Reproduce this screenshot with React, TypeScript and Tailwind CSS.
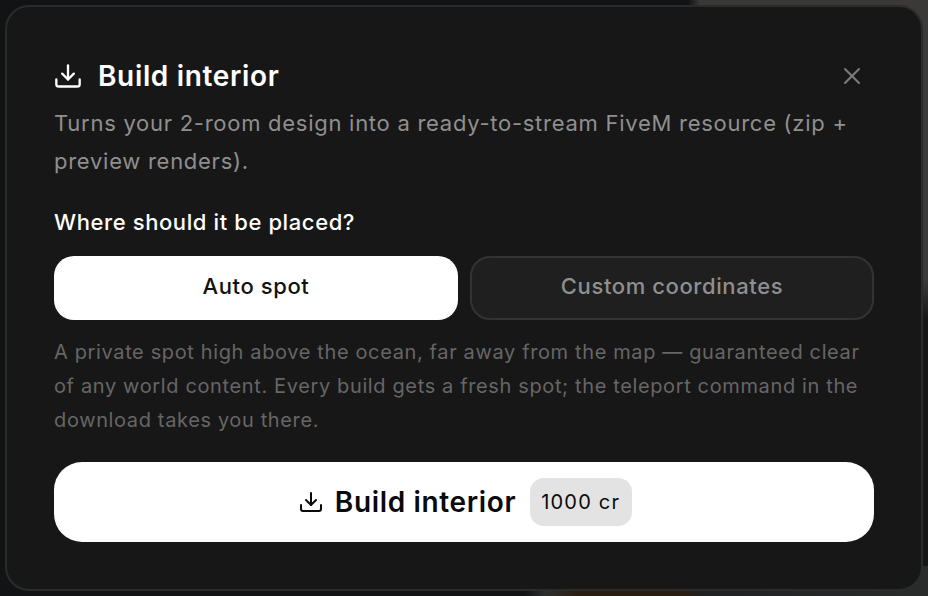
import React from 'react';
import { X } from 'lucide-react';

function DownloadIcon({ className }: { className: string }) {
  return (
    <svg className={className} viewBox="0 0 24 24" fill="none" stroke="currentColor" strokeWidth="2" strokeLinecap="round" strokeLinejoin="round">
      <path d="M12 3v12" />
      <path d="m7 10 5 5 5-5" />
      <path d="M2 15v4a2 2 0 0 0 2 2h16a2 2 0 0 0 2-2v-4" />
    </svg>
  );
}

export default function App() {
  return (
    <div className="h-[596px] w-[928px] overflow-hidden p-[5px] font-['Inter',sans-serif] [background:linear-gradient(90deg,#111315_688px,#3a3938_700px)_0_0/100%_30px_no-repeat,linear-gradient(90deg,#111315_525px,#2e2e2e_545px,#2a1d12_580px,#2a1d12_685px,#1f2122_705px,#2a2b2b_928px)_0_100%/100%_30px_no-repeat,linear-gradient(180deg,#3a3938_280px,#141617_320px)_100%_0/30px_100%_no-repeat,#111315]">
      {/* 弹窗 */}
      <div className="flex h-[586px] flex-col rounded-[24px] border-2 border-[#2a2c2c] bg-[#171717] px-[47px] pt-[47px]">
        {/* 标题 */}
        <div className="flex h-[44px] items-center justify-between">
          <div className="flex items-center gap-[16px]">
            <DownloadIcon className="h-[28px] w-[28px] text-white" />
            <h2 className="text-[28px] font-semibold tracking-[0.65px] text-white">Build interior</h2>
          </div>
          <button className="mr-[8px] text-[#7a7a7a]">
            <X className="h-[28px] w-[28px]" strokeWidth={1.75} />
          </button>
        </div>

        <p className="mt-[6px] text-[22px] leading-[38px] tracking-[0.73px] text-[#8f8f8f]">
          Turns your 2-room design into a ready-to-stream FiveM resource (zip + preview renders).
        </p>

        <div className="mt-[26px] text-[22px] font-medium leading-[32px] tracking-[0.6px] text-white">Where should it be placed?</div>

        {/* 位置选择 */}
        <div className="mt-[18px] grid grid-cols-2 gap-[12px]">
          <button className="h-[64px] rounded-[20px] bg-white pb-[4px] text-[22px] font-medium tracking-[0.6px] text-[#111111]">Auto spot</button>
          <button className="h-[64px] rounded-[20px] border-2 border-[#333333] bg-[#1f1f1f] pb-[4px] text-[22px] font-medium tracking-[0.6px] text-[#8f8f8f]">Custom coordinates</button>
        </div>

        <p className="mt-[15px] text-[20px] leading-[34px] tracking-[0.63px] text-[#666666]">
          A private spot high above the ocean, far away from the map — guaranteed clear of any world content. Every build gets a fresh spot; the teleport command in the download takes you there.
        </p>

        {/* 构建按钮 */}
        <button className="mt-[25px] flex h-[80px] items-center justify-center rounded-[28px] bg-white pl-[3px] text-[#0a0a0a]">
          <DownloadIcon className="h-[24px] w-[24px]" />
          <span className="ml-[12px] text-[28px] font-semibold tracking-[0.65px]">Build interior</span>
          <span className="ml-[14px] flex h-[48px] items-center rounded-[14px] bg-[#e3e3e3] pl-[11px] pr-[12px] text-[20px] font-normal tracking-[1.2px]">1000 cr</span>
        </button>
      </div>
    </div>
  );
}
